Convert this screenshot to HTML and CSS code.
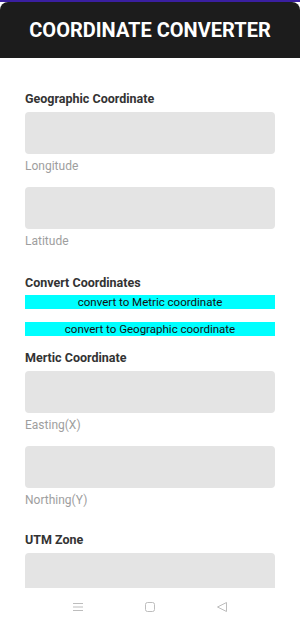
FILE: index.html
```html
<!DOCTYPE html>
<html>
<head>
  <title>Coordinate Converter</title>
  <meta charset="utf-8">
  <meta name="viewport" content="width=device-width,initial-scale=1.0">
  <link rel="stylesheet" href="styles.css">
</head>
<body>
  <div class="status-strip"></div>
  <div class="header">
    <h1 class="header-title">COORDINATE CONVERTER</h1>
  </div>
  <div class="main">
    <div class="form">
      <h2 class="section-title">Geographic Coordinate</h2>
      <div class="field">
        <input class="field-box" type="text">
        <label class="field-hint">Longitude</label>
      </div>
      <div class="field">
        <input class="field-box" type="text">
        <label class="field-hint">Latitude</label>
      </div>

      <h2 class="section-title section-title-convert">Convert Coordinates</h2>
      <button class="convert-btn">convert to Metric coordinate</button>
      <button class="convert-btn convert-btn-second">convert to Geographic coordinate</button>

      <h2 class="section-title">Mertic Coordinate</h2>
      <div class="field">
        <input class="field-box" type="text">
        <label class="field-hint">Easting(X)</label>
      </div>
      <div class="field">
        <input class="field-box" type="text">
        <label class="field-hint">Northing(Y)</label>
      </div>

      <h2 class="section-title section-title-utm">UTM Zone</h2>
      <div class="field">
        <input class="field-box" type="text">
      </div>
    </div>
  </div>
  <div class="nav-bar">
    <svg class="nav-icon" width="12" height="12" viewBox="0 0 12 12">
      <path d="M1 2.5h10M1 6h10M1 9.5h10" stroke="#bdbdbd" stroke-width="1" fill="none"/>
    </svg>
    <svg class="nav-icon" width="12" height="12" viewBox="0 0 12 12">
      <rect x="1.5" y="1.5" width="9" height="9" rx="2" stroke="#bdbdbd" stroke-width="1" fill="none"/>
    </svg>
    <svg class="nav-icon" width="12" height="12" viewBox="0 0 12 12">
      <path d="M10.5 1.5v9L1.5 6z" stroke="#bdbdbd" stroke-width="1" fill="none" stroke-linejoin="round"/>
    </svg>
  </div>
</body>
</html>
```

FILE: styles.css
```css
html, body {
  margin: 0;
  height: 100%;
}
body {
  font-family: Roboto, "Noto Sans", sans-serif;
  background: #fff;
  display: flex;
  flex-direction: column;
  overflow: hidden;
}
.status-strip {
  height: 2px;
  background: #3a1fa0;
  flex: none;
}
.header {
  height: 56px;
  background: #1c1c1c;
  border-radius: 8px 8px 0 0;
  display: flex;
  align-items: center;
  justify-content: center;
  flex: none;
}
.header-title {
  margin: 0;
  color: #fff;
  font-size: 20px;
  font-weight: 700;
}
.main {
  flex: 1;
  overflow: hidden;
}
.form {
  padding: 33px 25px 0;
}
.section-title {
  margin: 0 0 5px;
  font-size: 12.5px;
  font-weight: 700;
  color: #333;
  line-height: 16px;
}
/* margins collapse with the field above */
.section-title-convert {
  margin-top: 27px;
  margin-bottom: 4px;
}
.section-title-utm {
  margin-top: 25px;
}
.field {
  margin-bottom: 14px;
}
.field-box {
  display: block;
  box-sizing: border-box;
  width: 100%;
  height: 42px;
  border: none;
  border-radius: 4px;
  background: #e4e4e4;
  margin: 0;
}
.field-hint {
  display: block;
  margin-top: 5px;
  font-size: 12px;
  line-height: 14px;
  color: #9e9e9e;
}
.convert-btn {
  display: block;
  width: 100%;
  height: 14px;
  padding: 0;
  margin: 0;
  border: none;
  background: #00ffff;
  color: #111;
  font-family: Roboto, "Noto Sans", sans-serif;
  font-size: 11.5px;
  line-height: 14px;
}
.convert-btn-second {
  margin-top: 13px;
  margin-bottom: 14px;
}
.nav-bar {
  height: 37px;
  flex: none;
  background: #fff;
  display: flex;
  align-items: center;
  justify-content: center;
  gap: 60px;
}
.nav-icon {
  display: block;
}
```
